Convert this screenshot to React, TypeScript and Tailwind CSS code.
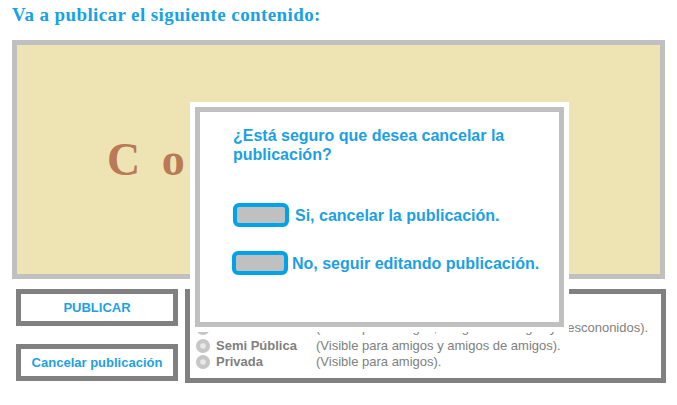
import React from "react";

const options = [
  { label: "Pública", text: "(Visible para amigos, amigos de amigos y descononidos)." },
  { label: "Semi Pública", text: "(Visible para amigos y amigos de amigos)." },
  { label: "Privada", text: "(Visible para amigos)." },
];

function Radio() {
  return (
    <svg width="14" height="14" viewBox="0 0 14 14" className="shrink-0">
      <circle cx="7" cy="7" r="7" fill="#c6c6c6" />
      <circle cx="7" cy="7" r="2.8" fill="#e9e9e9" />
    </svg>
  );
}

export default function App() {
  return (
    <div className="relative w-[677px] h-[405px] bg-white font-['Liberation_Sans',Arial,sans-serif]">
      <h1 className="h-[40px] pl-3 pt-[5px] font-['Liberation_Serif',serif] text-[19px] leading-[19px] font-bold tracking-[0.4px] text-[#17a2e6]">
        Va a publicar el siguiente contenido:
      </h1>

      <div className="ml-3 flex h-[239px] w-[653px] items-center overflow-hidden border-[5px] border-[#c0c0c0] bg-[#eee3b3] pl-[90px]">
        <span className="whitespace-nowrap font-['Liberation_Serif',serif] text-[46px] font-bold tracking-[5px] text-[#b97a55]">
          C o n t e n i d o
        </span>
      </div>

      <div className="ml-4 mt-[10px] flex gap-[7px]">
        <div className="flex w-[162px] flex-col gap-[18px]">
          <button className="flex h-[37px] items-center justify-center border-[5px] border-[#808080] bg-white pt-px text-[13px] font-bold text-[#1da1e3]">
            PUBLICAR
          </button>
          <button className="flex h-[37px] items-center justify-center border-[5px] border-[#808080] bg-white pt-px text-[13px] font-bold text-[#1da1e3]">
            Cancelar publicación
          </button>
        </div>

        <div className="h-[94px] w-[481px] border-[5px] border-[#808080] pl-[6px] pt-[26px] text-[13px] leading-4 text-[#808080]">
          {options.map((o, i) => (
            <div key={o.label} className={i === 0 ? "mb-[2px] flex items-center" : "flex items-center"}>
              <Radio />
              <span className="ml-[6px] w-[100px] shrink-0 font-bold">{o.label}</span>
              <span className="whitespace-nowrap">{o.text}</span>
            </div>
          ))}
        </div>
      </div>

      {/* modal */}
      <div className="absolute left-[190px] top-[102px] h-[230px] w-[379px] bg-white p-[5px]">
        <div className="h-full border-[5px] border-[#c0c0c0] bg-white pl-[33px] pr-[10px] pt-[14px] text-[16px] font-bold leading-[19px] text-[#1ba1e3]">
          <p>¿Está seguro que desea cancelar la publicación?</p>
          <div className="mt-[39px] flex flex-col gap-[24px]">
            <div className="flex items-center gap-[6px]">
              <span className="h-[24px] w-[56px] rounded-[6px] border-4 border-[#00a2e8] bg-[#c0c0c0]" />
              <span>Si, cancelar la publicación.</span>
            </div>
            <div className="-ml-px flex items-center gap-[4px]">
              <span className="h-[24px] w-[56px] rounded-[6px] border-4 border-[#00a2e8] bg-[#c0c0c0]" />
              <span>No, seguir editando publicación.</span>
            </div>
          </div>
        </div>
      </div>
    </div>
  );
}
